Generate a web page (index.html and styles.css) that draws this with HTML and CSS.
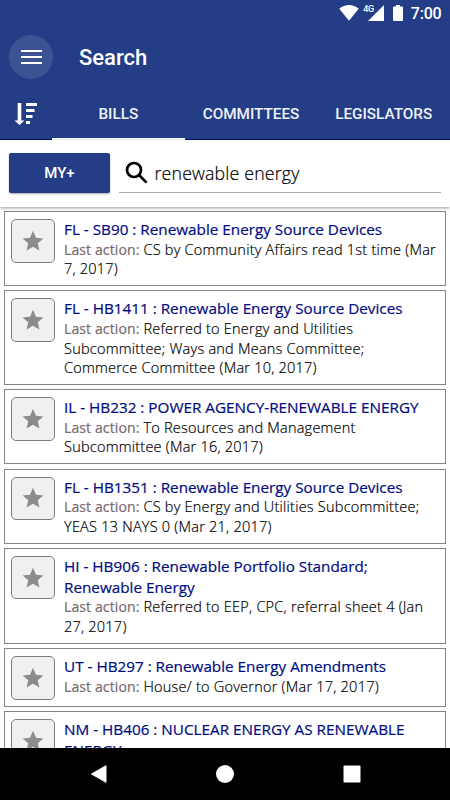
FILE: index.html
```html
<!DOCTYPE html>
<html lang="en">
<head>
<meta charset="utf-8">
<title>Search</title>
<link rel="stylesheet" href="styles.css">
</head>
<body>
<svg class="defs"><symbol id="star" viewBox="0 0 22 22"><path d="M11 .8 14 7.7 21.4 8.4 15.8 13.3 17.4 20.6 11 16.8 4.6 20.6 6.2 13.3.6 8.4 8 7.7Z"/></symbol></svg>
<header class="header">
  <div class="status">
    <svg class="wifi" viewBox="0 0 20 16"><path d="M.3 3.7C6-1.2 14-1.2 19.7 3.7L10 15.7Z"/></svg>
    <div class="signal"><span>4G</span><svg viewBox="0 0 16 16"><path d="M16 0V16H0Z"/></svg></div>
    <svg class="battery" viewBox="0 0 10 16"><path d="M3 0H7V1.5H9Q10 1.5 10 2.5V15Q10 16 9 16H1Q0 16 0 15V2.5Q0 1.5 1 1.5H3Z"/></svg>
    <span class="time">7:00</span>
  </div>
  <div class="toolbar">
    <div class="menu"><i></i><i></i><i></i></div>
    <h1>Search</h1>
  </div>
  <nav class="tabs">
    <div class="sort"><svg viewBox="0 0 23 24"><path d="M2.7 1H6.3V18.5H9.5L4.5 23 -.5 18.5H2.7ZM11 1H22V4H11ZM11 7H19.5V10H11ZM11 13H17.5V16H11ZM11 19H15V22H11Z"/></svg></div>
    <div class="tab active">BILLS</div>
    <div class="tab">COMMITTEES</div>
    <div class="tab">LEGISLATORS</div>
  </nav>
</header>
<section class="searchbar">
  <div class="my">MY+</div>
  <div class="field">
    <svg viewBox="0 0 24 24"><circle cx="9" cy="9" r="7" /><path d="M14 14 21.6 21.6"/></svg>
    <span>renewable energy</span>
  </div>
</section>
<main class="list">
  <article class="card"><div class="fav"><svg><use href="#star"/></svg></div><div><h2>FL - SB90 : Renewable Energy Source Devices</h2><p><b>Last action:</b> CS by Community Affairs read 1st time (Mar<br>7, 2017)</p></div></article>
  <article class="card"><div class="fav"><svg><use href="#star"/></svg></div><div><h2>FL - HB1411 : Renewable Energy Source Devices</h2><p><b>Last action:</b> Referred to Energy and Utilities<br>Subcommittee; Ways and Means Committee;<br>Commerce Committee (Mar 10, 2017)</p></div></article>
  <article class="card"><div class="fav"><svg><use href="#star"/></svg></div><div><h2>IL - HB232 : POWER AGENCY-RENEWABLE ENERGY</h2><p><b>Last action:</b> To Resources and Management<br>Subcommittee (Mar 16, 2017)</p></div></article>
  <article class="card"><div class="fav"><svg><use href="#star"/></svg></div><div><h2>FL - HB1351 : Renewable Energy Source Devices</h2><p><b>Last action:</b> CS by Energy and Utilities Subcommittee;<br>YEAS 13 NAYS 0 (Mar 21, 2017)</p></div></article>
  <article class="card"><div class="fav"><svg><use href="#star"/></svg></div><div><h2>HI - HB906 : Renewable Portfolio Standard;<br>Renewable Energy</h2><p><b>Last action:</b> Referred to EEP, CPC, referral sheet 4 (Jan<br>27, 2017)</p></div></article>
  <article class="card"><div class="fav"><svg><use href="#star"/></svg></div><div><h2>UT - HB297 : Renewable Energy Amendments</h2><p><b>Last action:</b> House/ to Governor (Mar 17, 2017)</p></div></article>
  <article class="card"><div class="fav"><svg><use href="#star"/></svg></div><div><h2>NM - HB406 : NUCLEAR ENERGY AS RENEWABLE<br>ENERGY</h2></div></article>
</main>
<footer class="navbar">
  <svg viewBox="0 0 18 18"><path d="M16.5 .5Q17.5 0 17.5 1.2V16.8Q17.5 18 16.5 17.5L2.5 9.6Q1.5 9 2.5 8.4Z"/></svg>
  <svg viewBox="0 0 18 18"><circle cx="9" cy="9" r="9"/></svg>
  <svg viewBox="0 0 18 18"><rect x=".5" y=".5" width="17" height="17" rx="1"/></svg>
</footer>
</body>
</html>
```
FILE: styles.css
```css
* { box-sizing: border-box; }
body { margin: 0; width: 450px; height: 800px; overflow: hidden; display: flex; flex-direction: column; background: #fff; font-family: "Open Sans", "Noto Sans", sans-serif; }
svg { display: block; }
.defs { position: absolute; width: 0; height: 0; }
h1, h2, p { margin: 0; }
.header { flex: none; height: 140px; background: #233e87; border-bottom: 1px solid #07106a; color: #fff; font-family: Roboto, sans-serif; display: flex; flex-direction: column; }
.status { flex: none; height: 28px; display: flex; justify-content: flex-end; align-items: flex-start; padding: 5px 8.5px 0 0; fill: #fff; }
.wifi { width: 20px; height: 16px; }
.signal { display: flex; margin-left: 4px; }
.signal span { font-size: 9px; font-weight: 500; line-height: 9px; margin-right: -6px; letter-spacing: -.3px; }
.signal svg { width: 16px; height: 16px; }
.battery { width: 10px; height: 16px; margin-left: 9px; }
.time { font-size: 16px; line-height: 18px; margin-left: 8px; font-weight: 500; letter-spacing: -.2px; }
.toolbar { flex: none; height: 58px; display: flex; align-items: center; padding-left: 9px; }
.menu { width: 44px; height: 44px; border-radius: 50%; background: #3b5293; display: flex; flex-direction: column; justify-content: center; align-items: center; gap: 4px; }
.menu i { width: 21px; height: 2px; background: #fff; }
.toolbar h1 { margin: 1px 0 0 26px; font-size: 22px; font-weight: 500; line-height: 28px; }
.tabs { flex: none; height: 54px; display: flex; }
.sort { width: 52px; padding: 16px 0 0 15px; }
.sort svg { width: 23px; height: 24px; fill: #fff; overflow: visible; }
.tab { width: 132.7px; text-align: center; font-size: 15.3px; font-weight: 500; line-height: 46px; padding-top: 5px; border-bottom: 2px solid transparent; white-space: nowrap; color: #f0f2f8; }
.tab.active { border-color: #fff; }
.searchbar { flex: none; height: 67px; display: flex; padding: 13px 9px 0; box-shadow: 0 1px 3px #0006; position: relative; }
.my { width: 101px; height: 40px; border-radius: 2px; background: #233e87; color: #fff; font: 500 15px/41px Roboto, sans-serif; text-align: center; box-shadow: 0 1px 2px #0005; }
.field { flex: 1; margin-left: 9px; height: 40px; border-bottom: 1px solid #aaa; display: flex; align-items: center; padding-left: 6px; }
.field svg { width: 24px; height: 24px; fill: none; stroke: #000; stroke-width: 2.7; }
.field span { margin-left: 5.5px; font-size: 17.8px; font-weight: 300; letter-spacing: .15px; color: #000; white-space: nowrap; -webkit-text-stroke: .2px #000; }
.list { flex: 1; min-height: 0; overflow: hidden; padding: 4px 4.5px 0 4px; display: flex; flex-direction: column; gap: 4.05px; }
.card { flex: none; border: 1px solid #858585; padding: 7px 0 6.5px 6px; display: flex; gap: 9px; }
.fav { flex: none; width: 44px; height: 43.5px; border: 1px solid #7c7c7c; border-radius: 5px; background: #eff1f1; display: flex; align-items: center; justify-content: center; }
.fav svg { width: 22px; height: 22px; fill: #8c8c8c; }
.card h2 { font-size: 15.28px; line-height: 20.8px; font-weight: 400; color: #000c80; -webkit-text-stroke: .2px #000c80; white-space: nowrap; }
.card p { font-size: 14.5px; font-weight: 300; letter-spacing: .23px; line-height: 19.5px; color: #000; white-space: nowrap; -webkit-text-stroke: .2px #000; }
.card b { font-size: 14.1px; font-weight: 400; letter-spacing: .07px; color: #7b696e; -webkit-text-stroke: .2px #7b696e; }
.navbar { flex: none; height: 52px; background: #000; display: flex; justify-content: center; align-items: center; gap: 109px; fill: #fff; }
.navbar svg { width: 18px; height: 18px; }
```
